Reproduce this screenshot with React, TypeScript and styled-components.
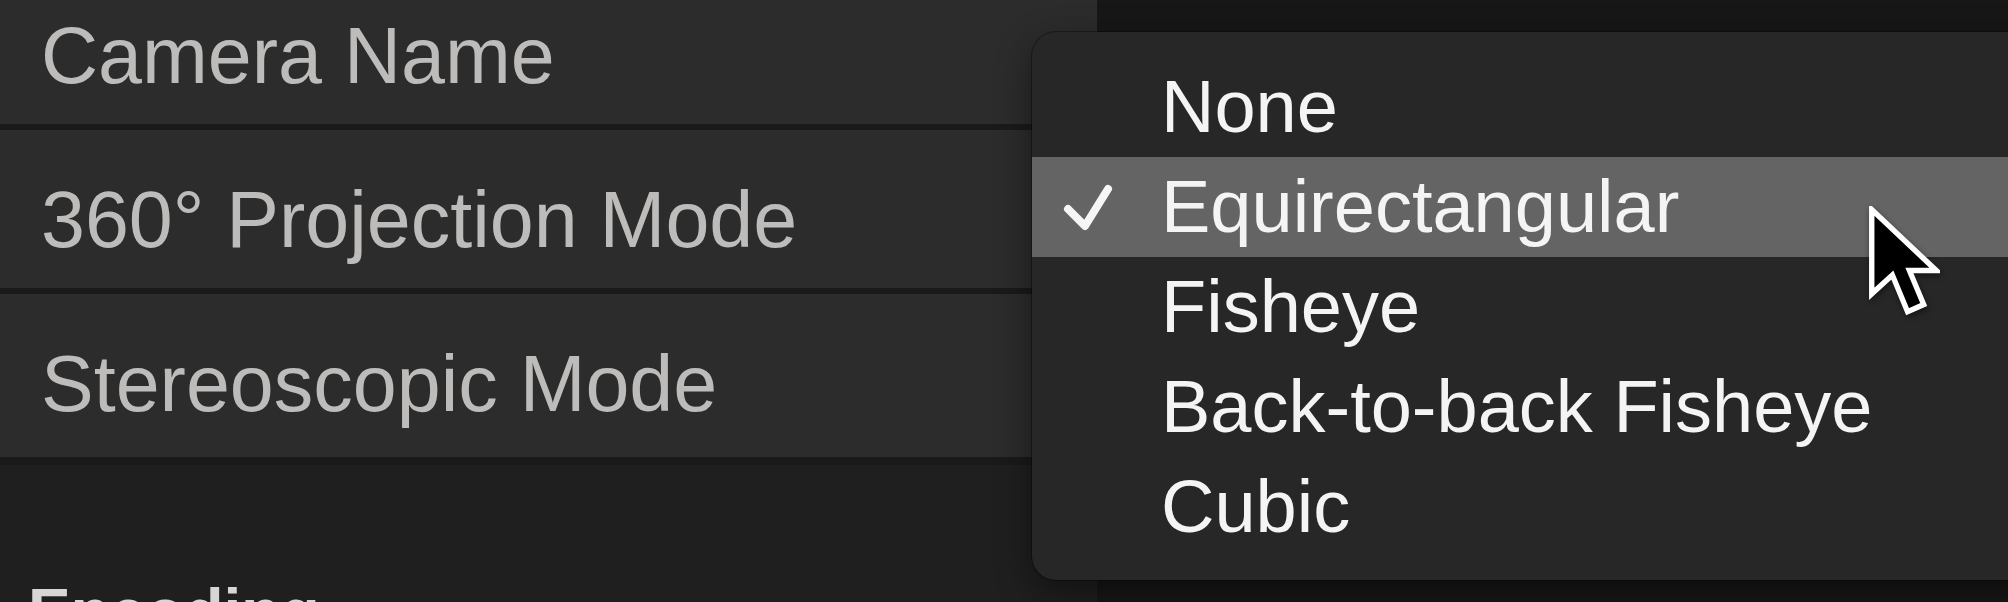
import React from "react";
import styled, { createGlobalStyle } from "styled-components";

const Global = createGlobalStyle`
  html, body {
    margin: 0;
    padding: 0;
    background: #171717;
    overflow: hidden;
  }
  * { box-sizing: border-box; }
`;

const Screen = styled.div`
  position: relative;
  display: flex;
  width: 2008px;
  height: 602px;
  overflow: hidden;
  font-family: "Liberation Sans", Arial, Helvetica, sans-serif;
`;

const Inspector = styled.div`
  width: 1097px;
  flex: none;
  display: flex;
  flex-direction: column;
  background: #1f1f1f;
`;

const PropertyList = styled.div`
  display: flex;
  flex-direction: column;
  margin-top: -34px;
`;

const PropertyRow = styled.div`
  height: 164px;
  padding: 21px 0 0 41px;
  line-height: 137px;
  font-size: 79px;
  color: #bdbcba;
  background: #2c2c2c;
  border-bottom: 6px solid #1a1a1a;
  white-space: nowrap;
  &:last-child {
    height: 163px;
    border-bottom: none;
  }
`;

const SectionDivider = styled.div`
  height: 21px;
  border-top: 8px solid #1a1a1a;
  background: #282828;
`;

const SectionTitle = styled.div`
  padding: 115px 0 0 28px;
  font-size: 64px;
  line-height: 64px;
  font-weight: 700;
  color: #d6d6d6;
  white-space: nowrap;
`;

const Viewer = styled.div`
  flex: 1;
  background: #171717;
`;

const PopupMenu = styled.div`
  position: absolute;
  left: 1032px;
  top: 32px;
  width: 1040px;
  padding: 25px 0 23px;
  background: #272727;
  border-radius: 24px;
  box-shadow: 0 12px 36px rgba(0, 0, 0, 0.45), 0 0 0 1px rgba(0, 0, 0, 0.35);
  display: flex;
  flex-direction: column;
`;

const MenuItem = styled.div<{ $selected?: boolean }>`
  display: flex;
  align-items: center;
  height: 100px;
  padding-left: 31px;
  background: ${(p) => (p.$selected ? "#646464" : "transparent")};
`;

const CheckSlot = styled.div`
  width: 98px;
  flex: none;
  display: flex;
  align-items: center;
`;

const MenuLabel = styled.span`
  font-size: 74px;
  line-height: 100px;
  color: #f4f4f4;
  white-space: nowrap;
`;

const Pointer = styled.svg`
  position: absolute;
  left: 1868px;
  top: 206px;
  width: 72px;
  height: 112px;
  filter: drop-shadow(1px 3px 3px rgba(0, 0, 0, 0.45));
`;

const Check = () => (
  <svg width="50" height="47" viewBox="0 0 50 47">
    <polyline
      points="5,25 22,42 45,5"
      fill="none"
      stroke="#f6f6f6"
      strokeWidth="8"
      strokeLinecap="round"
      strokeLinejoin="round"
    />
  </svg>
);

const options = ["None", "Equirectangular", "Fisheye", "Back-to-back Fisheye", "Cubic"];
const selected = "Equirectangular";

export default function App() {
  return (
    <>
      <Global />
      <Screen>
        <Inspector>
          <PropertyList>
            <PropertyRow>Camera Name</PropertyRow>
            <PropertyRow>360° Projection Mode</PropertyRow>
            <PropertyRow>Stereoscopic Mode</PropertyRow>
          </PropertyList>
          <SectionDivider />
          <SectionTitle>Encoding</SectionTitle>
        </Inspector>
        <Viewer />
        <PopupMenu>
          {options.map((o) => (
            <MenuItem key={o} $selected={o === selected}>
              <CheckSlot>{o === selected && <Check />}</CheckSlot>
              <MenuLabel>{o}</MenuLabel>
            </MenuItem>
          ))}
        </PopupMenu>
        <Pointer viewBox="0 0 80 125">
          <polygon
            points="4,4 4,98 27,77 44,118 62,110 46,72 76,72"
            fill="#000"
            stroke="#fff"
            strokeWidth="6"
            strokeLinejoin="miter"
          />
        </Pointer>
      </Screen>
    </>
  );
}
